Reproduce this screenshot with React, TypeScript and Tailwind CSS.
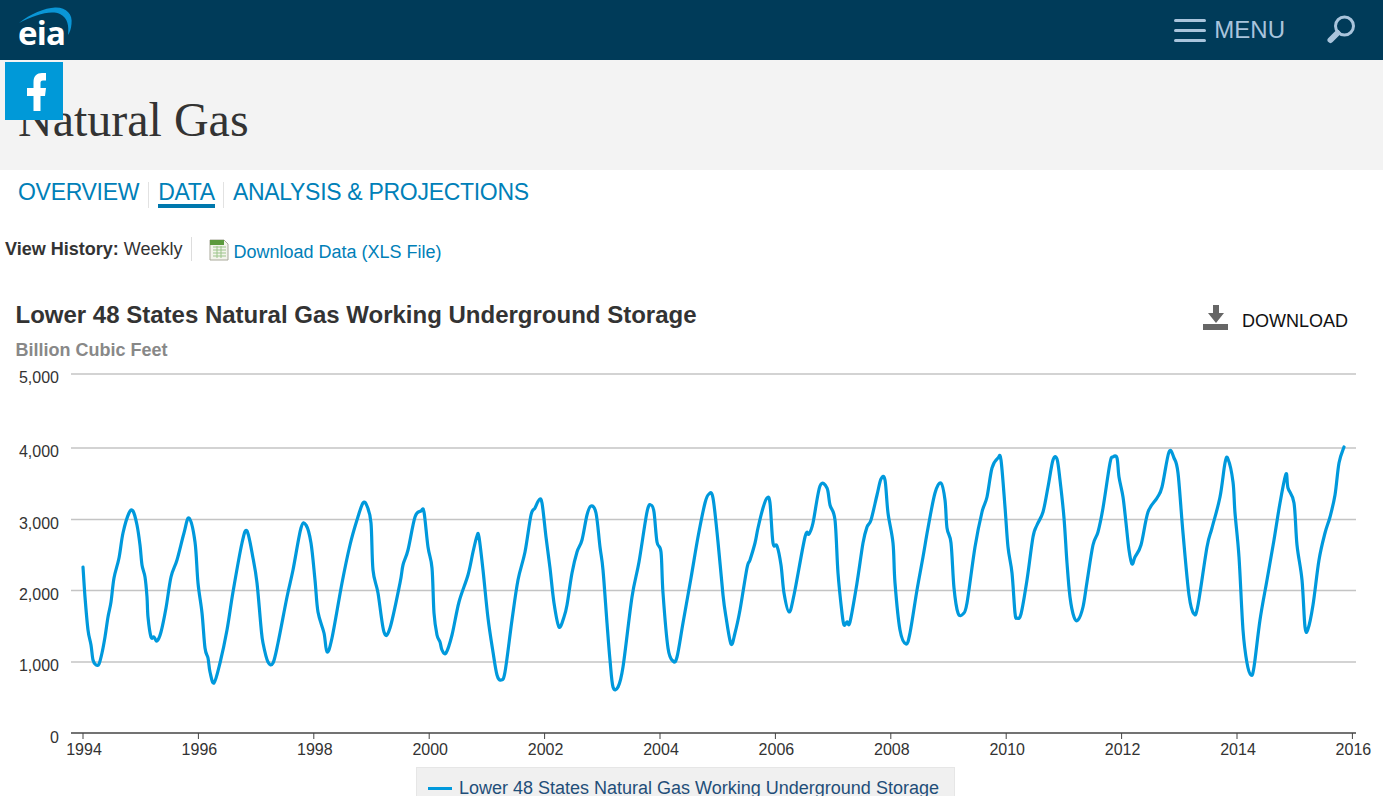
const series = [
  [83,567],[85,597],[88,630],[91,645],[93,660],[96,665],[99,664],[102,653],[105,637],[108,617],[111,602],[114,578],[119,558],[123,533],[129,513],[133,511],[137,525],[140,545],[142,565],[145,577],[147,597],[148,617],[151,637],[154,637],[157,641],[161,632],[166,608],[171,577],[177,560],[184,533],[189,518],[195,542],[198,583],[202,613],[205,648],[208,658],[210,672],[214,683],[220,663],[227,630],[233,592],[242,543],[247,531],[253,558],[257,583],[261,627],[263,643],[268,662],[273,663],[278,643],[287,597],[293,570],[301,528],[306,525],[311,543],[315,580],[318,612],[324,633],[327,652],[332,638],[342,583],[350,545],[357,520],[363,503],[367,506],[371,523],[373,570],[378,593],[384,632],[390,628],[400,583],
  [403,565],[408,550],[415,517],[421,511],[424,512],[428,547],[432,568],[434,613],[437,635],[440,642],[442,650],[446,653],[452,635],[459,602],[468,575],[473,552],[477,536],[479,537],[483,570],[488,618],[493,652],[497,675],[501,680],[505,672],[512,620],[518,580],[525,552],[531,515],[535,508],[539,500],[542,503],[546,537],[550,568],[554,603],[559,627],[564,617],[567,605],[572,573],[577,552],[582,540],[587,515],[591,506],[596,513],[600,547],[603,570],[607,623],[610,660],[613,687],[618,687],[623,667],[632,597],[639,562],[647,512],[651,505],[654,512],[657,542],[661,552],[663,593],[668,648],[673,661],[677,657],[683,623],[691,578],[698,537],[705,503],[709,494],[713,498],[718,542],[723,595],[726,617],[731,644],[735,633],[740,610],
  [747,568],[750,560],[755,543],[758,528],[763,508],[767,498],[770,503],[773,543],[777,546],[781,565],[784,593],[789,612],[794,595],[805,537],[809,534],[813,523],[820,486],[827,488],[830,505],[835,520],[838,573],[842,613],[844,625],[847,622],[850,622],[857,583],[863,543],[867,527],[871,520],[877,495],[881,479],[885,480],[888,513],[893,543],[895,583],[900,630],[906,644],[910,633],[917,590],[923,557],[928,528],[935,493],[941,483],[945,500],[947,528],[951,543],[954,588],[958,613],[963,614],[967,603],[975,547],[982,512],[987,497],[992,468],[998,458],[1001,460],[1005,507],[1008,547],[1012,573],[1015,613],[1017,618],[1021,614],[1027,580],[1033,537],[1037,525],[1043,512],[1048,487],[1053,460],[1057,459],
  [1060,480],[1064,518],[1067,563],[1070,597],[1074,617],[1078,620],[1083,607],[1087,582],[1093,545],[1098,532],[1103,508],[1110,463],[1113,457],[1117,458],[1119,477],[1123,497],[1126,523],[1129,550],[1132,564],[1135,557],[1141,545],[1148,512],[1157,498],[1162,487],[1169,452],[1174,458],[1178,473],[1183,533],[1189,595],[1194,614],[1198,605],[1207,547],[1212,528],[1220,497],[1225,463],[1228,459],[1233,482],[1235,513],[1239,557],[1243,630],[1247,663],[1251,675],[1254,667],[1260,620],[1267,580],[1274,540],[1280,503],[1286,474],[1288,488],[1294,503],[1297,545],[1302,580],[1305,627],[1308,629],[1313,605],[1319,560],[1325,533],[1330,517],[1335,495],[1339,463],[1344,447],
];

const gridLines = [
  { y: 374, label: "5,000" },
  { y: 448, label: "4,000" },
  { y: 519.5, label: "3,000" },
  { y: 590.5, label: "2,000" },
  { y: 662, label: "1,000" },
];

const years = [1994, 1996, 1998, 2000, 2002, 2004, 2006, 2008, 2010, 2012, 2014, 2016];

// Catmull-Rom through the traced points, so the line doesn't look faceted
function smoothPath(pts: number[][]) {
  let d = `M${pts[0][0]} ${pts[0][1]}`;
  for (let i = 0; i < pts.length - 1; i++) {
    const p0 = pts[Math.max(i - 1, 0)];
    const p1 = pts[i];
    const p2 = pts[i + 1];
    const p3 = pts[Math.min(i + 2, pts.length - 1)];
    const c1x = p1[0] + (p2[0] - p0[0]) / 6;
    const c1y = p1[1] + (p2[1] - p0[1]) / 6;
    const c2x = p2[0] - (p3[0] - p1[0]) / 6;
    const c2y = p2[1] - (p3[1] - p1[1]) / 6;
    d += `C${c1x} ${c1y} ${c2x} ${c2y} ${p2[0]} ${p2[1]}`;
  }
  return d;
}

function Logo() {
  return (
    <div className="relative w-[80px] h-[60px] ml-[13px]">
      <svg width="80" height="60" viewBox="0 0 80 60" className="absolute left-[-13px] top-0">
        <path d="M19 23C30 14 45 8 55 7.5C66 7 73 14 71.5 24C71 29 70 32 68 35C69 26 68 18 60 14C50 10 35 15 19 23Z" fill="#0a96d6" />
      </svg>
      <span className="absolute left-[5px] top-[13px] text-[33px] leading-[40px] font-bold tracking-[-0.8px] text-white font-['Open_Sans',sans-serif]">eia</span>
    </div>
  );
}

function Chart() {
  return (
    <svg width="1383" height="398" viewBox="0 365 1383 398" className="block font-['Liberation_Sans',Arial,sans-serif]">
      {gridLines.map((g) => (
        <g key={g.y}>
          <line x1="71" x2="1356" y1={g.y} y2={g.y} stroke="#c4c4c4" strokeWidth="1.5" />
          <text x="59" y={g.y + 9} textAnchor="end" fontSize="16" fill="#333">{g.label}</text>
        </g>
      ))}
      <line x1="71" x2="1356" y1="733" y2="733" stroke="#444" strokeWidth="1.5" />
      <text x="59" y="743" textAnchor="end" fontSize="16" fill="#333">0</text>
      {years.map((yr, i) => (
        <g key={yr}>
          <line x1={83 + i * 115.4} x2={83 + i * 115.4} y1="733" y2="739" stroke="#444" strokeWidth="1" />
          <text x={84 + i * 115.4} y="755" textAnchor="middle" fontSize="16" fill="#333">{yr}</text>
        </g>
      ))}
      <path
        d={smoothPath(series)}
        fill="none"
        stroke="#0099dc"
        strokeWidth="3.2"
        strokeLinejoin="round"
        strokeLinecap="round"
      />
    </svg>
  );
}

export default function App() {
  return (
    <div className="relative h-[796px] overflow-hidden bg-white font-['Liberation_Sans',Arial,sans-serif]">
      {/* top bar */}
      <div className="flex items-center justify-between h-[60px] bg-[#003b59]">
        <Logo />
        <div className="flex items-center pr-[27px]">
          <div className="flex flex-col gap-[7px] w-[32px]">
            <div className="h-[3px] rounded-sm bg-[#a9c4dc]" />
            <div className="h-[3px] rounded-sm bg-[#a9c4dc]" />
            <div className="h-[3px] rounded-sm bg-[#a9c4dc]" />
          </div>
          <span className="ml-[8px] text-[24px] leading-[30px] text-[#a9c4dc]">MENU</span>
          <svg width="30" height="30" viewBox="0 0 30 30" className="ml-[41px]">
            <circle cx="18.5" cy="11" r="9" fill="none" stroke="#a9c4dc" strokeWidth="3" />
            <path d="M11.5 18L4.5 25" stroke="#a9c4dc" strokeWidth="6" strokeLinecap="round" />
          </svg>
        </div>
      </div>

      {/* title band */}
      <div className="flex items-center h-[110px] pl-[18px] bg-[#f3f3f3]">
        <h1 className="mt-[10px] text-[48px] leading-[56px] text-[#333] font-['Liberation_Serif',serif]">Natural Gas</h1>
      </div>
      <a className="absolute left-[5px] top-[62px] w-[58px] h-[58px] bg-[#0099d8]">
        <svg width="58" height="58" viewBox="0 0 58 58">
          <path d="M28.5 49V34H22V26H28.5V20C28.5 14 32 11 37 11H41V18.5H38C36 18.5 35.5 19.5 35.5 21V26H41L40 34H35.5V49Z" fill="#fff" />
        </svg>
      </a>

      {/* section nav */}
      <div className="flex items-start h-[38px] mt-[9px] pl-[18px] text-[23px] tracking-[-0.3px] leading-[27px] text-[#0080b8]">
        <span>OVERVIEW</span>
        <span className="ml-[9px] mr-[9px] mt-[3px] h-[26px] w-px bg-[#e2e2e2]" />
        <span className="h-[29px] border-b-4 border-[#0078ad]">DATA</span>
        <span className="ml-[8px] mr-[9px] mt-[3px] h-[26px] w-px bg-[#e2e2e2]" />
        <span>ANALYSIS &amp; PROJECTIONS</span>
      </div>

      {/* history row */}
      <div className="flex items-center h-[30px] mt-[17px] pl-[5px] text-[#333]">
        <span className="text-[18px] font-bold">View History:</span>
        <span className="ml-[5px] text-[18px]">Weekly</span>
        <span className="ml-[9px] h-[24px] w-px bg-[#ddd]" />
        <svg width="22" height="22" viewBox="0 0 22 22" className="ml-[16px] mt-[2px]">
          <path d="M2 1H16L20 5V21H2Z" fill="#f4f4ec" stroke="#a9a99a" strokeWidth="1" />
          <path d="M2 1H16V6H2Z" fill="#5c9a3c" />
          <path d="M5 8H18M5 11H18M5 14H18M5 17H18M9 7V19M13 7V19" stroke="#9cc48a" strokeWidth="1" fill="none" />
        </svg>
        <span className="ml-[3px] mt-[7px] text-[18px] text-[#0080b8]">Download Data (XLS File)</span>
      </div>

      {/* chart header */}
      <div className="flex justify-between h-[65px] mt-[36px] pl-[15.5px] pr-[35px]">
        <div>
          <div className="text-[24px] leading-[30px] font-bold text-[#333]">Lower 48 States Natural Gas Working Underground Storage</div>
          <div className="mt-[10px] text-[18px] leading-[20px] font-bold text-[#888]">Billion Cubic Feet</div>
        </div>
        <div className="flex items-start">
          <svg width="28" height="28" viewBox="0 0 28 28" className="mt-[5px]">
            <path d="M11 0H17V8H22L14 18L6 8H11Z" fill="#666" />
            <rect x="1" y="19" width="25" height="6" fill="#666" />
          </svg>
          <span className="ml-[12px] mt-[10px] text-[18px] leading-[22px] text-[#111]">DOWNLOAD</span>
        </div>
      </div>

      <Chart />

      {/* legend */}
      <div className="flex items-center ml-[416px] mt-[4px] w-[539px] h-[42px] pl-[11px] bg-[#f0f0f0] border border-[#e6e6e6]">
        <span className="w-[24px] h-[3px] bg-[#0099dc]" />
        <span className="ml-[7px] text-[18px] text-[#1f4e79] whitespace-nowrap">Lower 48 States Natural Gas Working Underground Storage</span>
      </div>
    </div>
  );
}
